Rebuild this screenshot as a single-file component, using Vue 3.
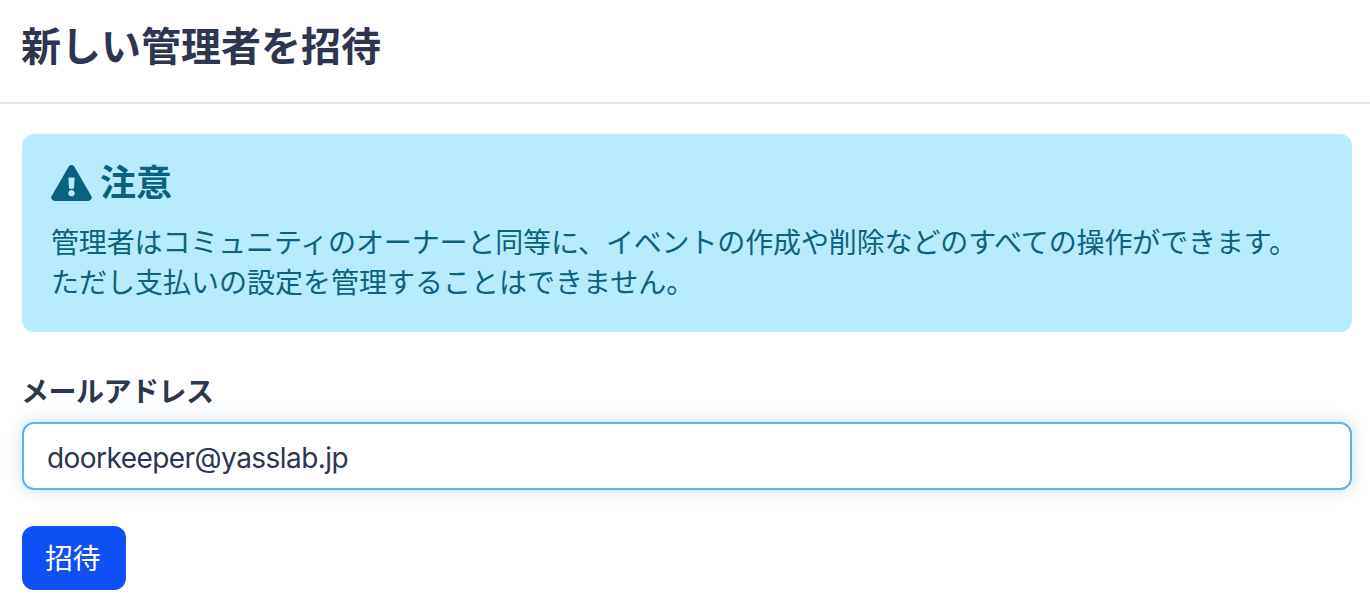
<template>
  <div class="page">
    <header class="page-header">
      <h1>新しい管理者を招待</h1>
    </header>

    <main class="content">
      <section class="notice">
        <h2 class="notice-title">
          <svg class="notice-icon" viewBox="0 0 576 512" aria-hidden="true">
            <path
              fill="currentColor"
              d="M569.517 440.013C587.975 472.007 564.806 512 527.94 512H48.054c-36.937 0-59.999-40.055-41.577-71.987L246.423 23.985c18.467-32.009 64.72-31.951 83.154 0l239.94 416.028zM288 354c-25.405 0-46 20.595-46 46s20.595 46 46 46 46-20.595 46-46-20.595-46-46-46zm-43.673-165.346l7.418 136c.347 6.364 5.609 11.346 11.982 11.346h48.546c6.373 0 11.635-4.982 11.982-11.346l7.418-136c.375-6.874-5.098-12.654-11.982-12.654h-63.383c-6.884 0-12.356 5.78-11.981 12.654z"
            />
          </svg>
          注意
        </h2>
        <p class="first-line">管理者はコミュニティのオーナーと同等に、イベントの作成や削除などのすべての操作ができます。</p>
        <p>ただし支払いの設定を管理することはできません。</p>
      </section>

      <form class="invite-form" @submit.prevent>
        <label class="field-label" for="email">メールアドレス</label>
        <input id="email" v-model="email" class="field-input" type="text" />
        <button class="submit" type="submit">招待</button>
      </form>
    </main>
  </div>
</template>

<script setup>
import { ref } from "vue";

const email = ref("doorkeeper@yasslab.jp");
</script>

<style>
html,
body {
  margin: 0;
  background: #fff;
}
</style>

<style scoped>
.page {
  width: 1370px;
  height: 610px;
  overflow: hidden;
  font-family: Inter, "Noto Sans CJK JP", sans-serif;
  color: #2d354f;
}
.page-header {
  box-sizing: content-box;
  height: 94px;
  padding: 0 0 8px 21px;
  border-bottom: 2px solid #e3e6ea;
  display: flex;
  align-items: center;
}
h1 {
  margin: 0;
  font-size: 40px;
  line-height: 1;
  font-weight: 700;
}
.content {
  padding: 30px 18px 0 22px;
}
.notice {
  box-sizing: border-box;
  height: 198px;
  padding: 26px 29px 0;
  border-radius: 12px;
  background: #b8ebfd;
  color: #0b6280;
  font-size: 28px;
  line-height: 40px;
}
.notice p {
  margin: 0;
}
.notice p.first-line {
  letter-spacing: -0.13px;
}
.notice-title {
  display: flex;
  align-items: center;
  gap: 8px;
  margin: 0 0 17px;
  font-size: 36px;
  line-height: 46px;
  font-weight: 700;
}
.notice-icon {
  width: 41px;
  height: 36px;
}
.invite-form {
  display: flex;
  flex-direction: column;
  align-items: flex-start;
  margin-top: 42px;
}
.field-label {
  font-size: 28px;
  line-height: 36px;
  font-weight: 700;
  margin-left: -1px;
  letter-spacing: -0.5px;
}
.field-input {
  box-sizing: border-box;
  width: 100%;
  height: 68px;
  margin-top: 12px;
  padding: 3px 23px 0;
  border: 2px solid #63aeec;
  border-radius: 12px;
  outline: none;
  background: #fff;
  box-shadow: 0 0 16px rgba(50, 152, 220, 0.3);
  font: inherit;
  font-size: 28px;
  letter-spacing: -0.55px;
  color: #2d354f;
}
.submit {
  width: 104px;
  height: 64px;
  margin-top: 36px;
  padding: 0 3px 2px 0;
  border: none;
  border-radius: 12px;
  background: #0f50f5;
  color: #fff;
  font: inherit;
  font-size: 28px;
  letter-spacing: -0.5px;
  cursor: pointer;
}
</style>
